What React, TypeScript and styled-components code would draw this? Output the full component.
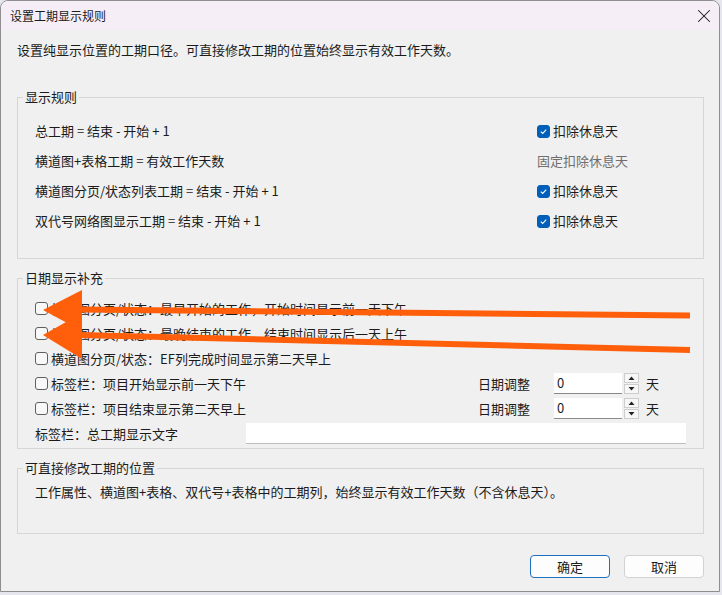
import React from 'react';
import styled, { createGlobalStyle } from 'styled-components';
import { X } from 'lucide-react';

const GlobalStyle = createGlobalStyle`
  html, body {
    margin: 0;
    padding: 0;
    background: #e6e7ee;
  }
  body {
    font-family: "Noto Sans CJK SC", "Noto Sans", sans-serif;
    color: #1b1b1b;
  }
`;

const Dialog = styled.div`
  position: relative;
  width: 720px;
  height: 592px;
  box-sizing: border-box;
  background: #f0f0f0;
  border: 1px solid #8e8e8e;
  border-radius: 8px 8px 0 0;
  overflow: hidden;
  display: flex;
  flex-direction: column;
`;

const TitleBar = styled.div`
  height: 29px;
  flex: none;
  background: #f5eef6;
  display: flex;
  align-items: center;
  justify-content: space-between;
  padding: 0 3px 0 9px;
  font-size: 12px;
  line-height: 16px;
`;

const CloseButton = styled.div`
  display: flex;
  align-items: center;
  justify-content: center;
  width: 24px;
  height: 24px;
  color: #1b1b1b;
`;

const Body = styled.div`
  flex: 1;
  display: flex;
  flex-direction: column;
  padding: 0 15px 0 16px;
`;

const Description = styled.div`
  margin-top: 10px;
  font-size: 13px;
  line-height: 20px;
`;

const Group = styled.fieldset<{ $top: number; $padBottom: number }>`
  margin: ${p => p.$top}px 0 0 0;
  padding: 0 0 ${p => p.$padBottom}px 0;
  border: 1px solid #d6d6d6;
  min-width: 0;
`;

const Legend = styled.legend`
  margin-left: 5px;
  padding: 0 2px;
  font-size: 13px;
  line-height: 18px;
`;

const RuleList = styled.div`
  padding: 10px 0 0 17px;
`;

const RuleRow = styled.div`
  height: 30px;
  display: grid;
  grid-template-columns: 502px 1fr;
  align-items: center;
  font-size: 13px;
  line-height: 18px;
`;

const Muted = styled.span`
  color: #6e6e6e;
`;

const CheckLabel = styled.label`
  display: flex;
  align-items: center;
  gap: 3px;
`;

const Box = styled.span<{ $checked?: boolean }>`
  width: 13px;
  height: 13px;
  box-sizing: border-box;
  flex: none;
  border-radius: 3px;
  display: inline-flex;
  align-items: center;
  justify-content: center;
  background: ${p => (p.$checked ? '#005fb8' : '#f8f8f8')};
  border: 1px solid ${p => (p.$checked ? '#005fb8' : '#5f5f5f')};
`;

const OptionList = styled.div`
  padding: 9px 0 0 17px;
`;

const OptionRow = styled.div`
  height: 25px;
  display: flex;
  align-items: center;
  font-size: 13px;
  line-height: 18px;
`;

const OptionMain = styled.div`
  width: 443px;
  flex: none;
`;

const AdjustLabel = styled.span`
  width: 76px;
  flex: none;
`;

const NumberInput = styled.div`
  width: 68px;
  height: 21px;
  box-sizing: border-box;
  background: #ffffff;
  border-bottom: 1px solid #8a8a8a;
  padding: 0 3px;
  display: flex;
  align-items: center;
  font-size: 13px;
`;

const Spin = styled.div`
  display: flex;
  flex-direction: column;
  gap: 1px;
  margin-left: 2px;
`;

const SpinButton = styled.div`
  width: 15px;
  height: 10px;
  box-sizing: border-box;
  border: 1px solid #cdcdcd;
  background: #f7f7f7;
  display: flex;
  align-items: center;
  justify-content: center;
`;

const Unit = styled.span`
  margin-left: 7px;
`;

const TextLabel = styled.span`
  width: 211px;
  flex: none;
`;

const TextInput = styled.div`
  width: 440px;
  height: 21px;
  box-sizing: border-box;
  background: #ffffff;
  border-bottom: 1px solid #bdbdbd;
`;

const NoteText = styled.div`
  padding: 5px 0 0 17px;
  font-size: 13px;
  line-height: 20px;
`;

const Footer = styled.div`
  margin-top: 21px;
  display: flex;
  justify-content: flex-end;
  gap: 14px;
`;

const Button = styled.div<{ $primary?: boolean }>`
  width: 80px;
  height: 23px;
  box-sizing: border-box;
  border-radius: 4px;
  background: #fdfdfd;
  border: 1px solid ${p => (p.$primary ? '#1f6fbf' : '#d2d2d2')};
  display: flex;
  align-items: center;
  justify-content: center;
  font-size: 13px;
`;

const Overlay = styled.svg`
  position: absolute;
  left: -1px;
  top: -1px;
  pointer-events: none;
`;

const Check: React.FC<{ checked?: boolean }> = ({ checked }) => (
  <Box $checked={checked}>
    {checked && (
      <svg width="9" height="9" viewBox="0 0 9 9">
        <polyline points="1.8,4.6 3.7,6.4 7.2,2.6" fill="none" stroke="#fff" strokeWidth="1.1" />
      </svg>
    )}
  </Box>
);

const Arrow: React.FC<{ up?: boolean }> = ({ up }) => (
  <svg width="7" height="4" viewBox="0 0 7 4">
    <polygon points={up ? '0.5,4 3.5,0.5 6.5,4' : '0.5,0 3.5,3.5 6.5,0'} fill="#222" />
  </svg>
);

const rules = [
  { text: '总工期 = 结束 - 开始 + 1', check: true },
  { text: '横道图+表格工期 = 有效工作天数', check: false },
  { text: '横道图分页/状态列表工期 = 结束 - 开始 + 1', check: true },
  { text: '双代号网络图显示工期 = 结束 - 开始 + 1', check: true },
];

const options = [
  { text: '横道图分页/状态：最早开始的工作，开始时间显示前一天下午', adjust: false },
  { text: '横道图分页/状态：最晚结束的工作，结束时间显示后一天上午', adjust: false },
  { text: '横道图分页/状态：EF列完成时间显示第二天早上', adjust: false },
  { text: '标签栏：项目开始显示前一天下午', adjust: true },
  { text: '标签栏：项目结束显示第二天早上', adjust: true },
];

const ORANGE = '#ff5f0a';

export default function App() {
  return (
    <>
      <GlobalStyle />
      <Dialog>
        <TitleBar>
          <span>设置工期显示规则</span>
          <CloseButton>
            <X size={22} strokeWidth={1.1} />
          </CloseButton>
        </TitleBar>
        <Body>
          <Description>设置纯显示位置的工期口径。可直接修改工期的位置始终显示有效工作天数。</Description>

          <Group $top={28} $padBottom={22}>
            <Legend>显示规则</Legend>
            <RuleList>
              {rules.map(r => (
                <RuleRow key={r.text}>
                  <span>{r.text}</span>
                  {r.check ? (
                    <CheckLabel>
                      <Check checked />
                      扣除休息天
                    </CheckLabel>
                  ) : (
                    <Muted>固定扣除休息天</Muted>
                  )}
                </RuleRow>
              ))}
            </RuleList>
          </Group>

          <Group $top={10} $padBottom={2}>
            <Legend>日期显示补充</Legend>
            <OptionList>
              {options.map(o => (
                <OptionRow key={o.text}>
                  <OptionMain>
                    <CheckLabel>
                      <Check />
                      {o.text}
                    </CheckLabel>
                  </OptionMain>
                  {o.adjust && (
                    <>
                      <AdjustLabel>日期调整</AdjustLabel>
                      <NumberInput>0</NumberInput>
                      <Spin>
                        <SpinButton>
                          <Arrow up />
                        </SpinButton>
                        <SpinButton>
                          <Arrow />
                        </SpinButton>
                      </Spin>
                      <Unit>天</Unit>
                    </>
                  )}
                </OptionRow>
              ))}
              <OptionRow>
                <TextLabel>标签栏：总工期显示文字</TextLabel>
                <TextInput />
              </OptionRow>
            </OptionList>
          </Group>

          <Group $top={10} $padBottom={31}>
            <Legend>可直接修改工期的位置</Legend>
            <NoteText>工作属性、横道图+表格、双代号+表格中的工期列，始终显示有效工作天数（不含休息天）。</NoteText>
          </Group>

          <Footer>
            <Button $primary>确定</Button>
            <Button>取消</Button>
          </Footer>
        </Body>

        <Overlay width="722" height="595" viewBox="0 0 722 595">
          <line x1="78" y1="309.5" x2="690" y2="315.5" stroke={ORANGE} strokeWidth="6" />
          <line x1="78" y1="335" x2="690" y2="350" stroke={ORANGE} strokeWidth="6" />
          <polygon points="43,310 82,290 82,331" fill={ORANGE} />
          <polygon points="43,335 82,313 82,359" fill={ORANGE} />
        </Overlay>
      </Dialog>
    </>
  );
}
